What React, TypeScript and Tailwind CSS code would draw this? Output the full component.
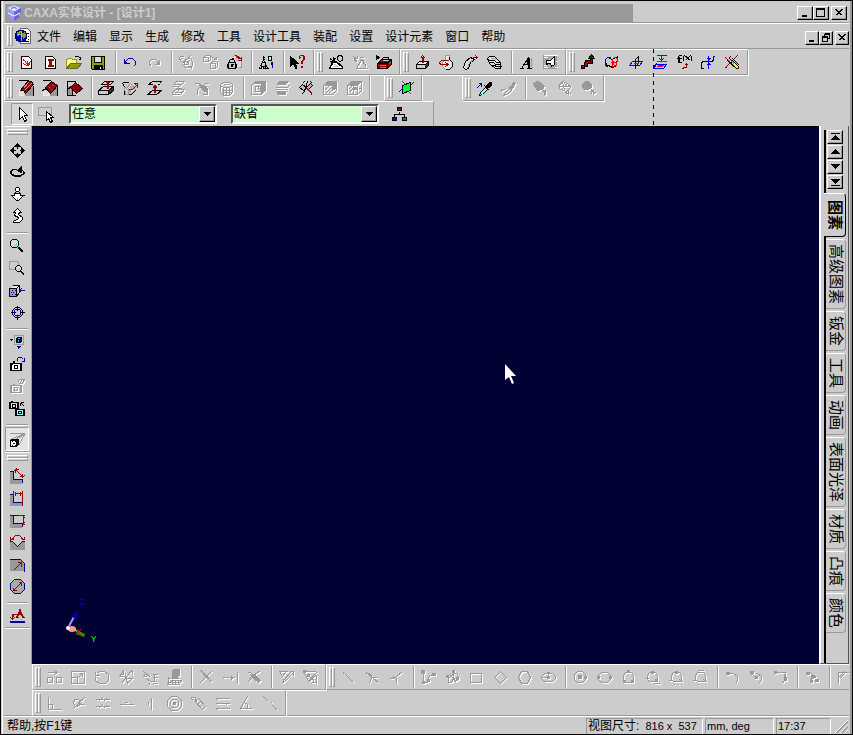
import { useState } from "react";
import clsx from "clsx";

// [path, stroke, fill]
type Part = [string, string, string?];

const K = "#000";
const W = "#fff";
const R = "#990000";
const B = "#000099";
const G = "#999";
const BLUE = "#0000ff";
const RED = "#ff0000";

const PAGE: Part = ["M3 2H10L13 5V14H3Z", K, W];
const CORNER: Part = ["M1 4H3V12H12V15H1Z", G, G];

const ICONS: Record<string, Part[]> = {
  "New design": [PAGE, ["M5 5L6 7M6 6L8 9M7 8L9 10L12 7M11 7V10L9 11M5 9L8 11H10M9 6V9", RED]],
  "New drawing": [PAGE, ["M5 5H11M5 6H11M8 6V11M7 6V11M9 6V11M5 11H11M5 12H11", R]],
  Open: [
    ["M0 14V5H1L2 4H5L6 5H10V8", "#990", "#ffff99"],
    ["M0 14L4 9H15L11 14Z", "#663", "#990"],
    ["M8 3L9 2H12L14 4M14 2V5H12", K],
  ],
  Save: [
    ["M1 2H14V15H2L1 14Z", K, "#990"],
    ["M4 2H11V8H4Z", K, "#ddd"],
    ["M4 11H12V15H4Z", K, K],
    ["M10 12V14", W],
  ],
  Undo: [["M2 4V9H7M2 8L6 4H10L13 7V10L11 12M3 7V8H4", B]],
  "Lock update": [
    ["M6 3L8 1H10V4M11 6H15V13H12", G, "#ddd"],
    ["M9 1L14 5M15 2V6H11M10 1L15 5", R],
    ["M3 8V6L4 5H7L8 6V8M2 8H9V14H2Z", K, "#ccc"],
    ["M1 9V13M10 9V13M5 10V12M6 10V12M4 10H7M4 5L3 6M7 4H5", K],
  ],
  "Browse tree": [
    ["M5 1V4M4 3H6M5 5L2 12M5 5L8 12M3 8H7M4 5H6M3 9V11M7 9V11M1 12V14M3 12V14M5 11V14M7 12V14M9 12V14M0 14H3M5 14H10M2 12H8", K],
    ["M10 2H13V6H10Z", K, "#9ff"],
    ["M14 7V13M13 7V10", B],
  ],
  "Context help": [
    ["M0 2V12L3 9L5 14H6V12L5 9H8Z", K, K],
    ["M9 4V2L10 1H13L14 3V5L12 7V9M10 3V2M13 2V5L11 7V9M11 12H12V13H11Z", R],
  ],
  "Smart render": [
    ["M1 14L4 8H9L14 12V14H1Z", K, W],
    ["M2 4L5 7M5 2V7M1 7H7M2 9L4 7M7 4L5 6M1 5H3M6 3V6M2 10H4", K],
    ["M9 3L10 1H13L14 3V6L11 7L9 5Z", K, "#ccc"],
    ["M9 7V9L13 12M8 7L14 13", K],
    ["M6 10L10 12M4 12H10", "#ccc"],
  ],
  "Tool box": [
    ["M1 9L5 5H15V10L11 14H1Z", K, R],
    ["M5 5L7 3H12V5M1 9H11V14M11 9L15 5M2 8H11L14 5", K],
    ["M0 1V5L3 3ZM1 2V4", K, K],
    ["M3 11H9M3 13H9M12 10L14 8", "#cc6666"],
    ["M6 6H12", "#ccc"],
  ],
  Extrude: [
    ["M2 10L5 7H14V11L11 14H2Z", K, "#333"],
    ["M2 10L5 7H14L11 10Z", K, "#eee"],
    ["M3 11H10V13H3Z", "#ccc", "#ccc"],
    ["M8 8V2M9 8V2M6 4L8 1L11 4M7 3H10", R],
  ],
  Spin: [
    ["M6 1H11M7 1V5L4 8V12L7 15H11L14 12V8L11 5V1", G, "#e8e8e8"],
    ["M11 2V5L14 8V12L11 15H7", K],
    ["M10 6H3L1 8V9L3 10H10M7 8L10 10L7 12M8 9V11", R],
  ],
  Sweep: [
    ["M1 13L3 7L8 3L12 5L8 8L6 14L3 15Z", K, "#ddd"],
    ["M5 14L7 8L11 5", G],
    ["M10 3H15M13 1L15 3L13 5M14 2V4", R],
  ],
  Loft: [
    ["M1 4L3 2H8L14 8V14H9L3 9Z", K, "#ddd"],
    ["M1 5L4 6H8L10 8H14M3 8H7L9 10H14M5 11H8L10 12H15M2 2H7", K],
    ["M4 4H8L10 6", G],
  ],
  Text: [
    ["M1 14H5M8 14H13M3 14L10 3L11 14M10 3V14M9 5V9M6 10H11M11 3V14", K],
    ["M13 3V11L14 14", G],
  ],
  "2D shape": [
    ["M1 1H14V14H1Z", G, "#aaa"],
    ["M1 1H15M1 3H5M1 13H5M1 11H4M12 13H15M13 7H15", W],
    ["M4 10V6H8L12 2V10L9 12L8 9H6Z", K, W],
  ],
  "3D curve": [
    ["M1 14V11H4V8H5V6H10V3H12V9H7V12H4V14Z", K, R],
    ["M8 4L11 0L14 4Z", K, R],
  ],
  Surface: [
    ["M1 5L3 3L8 5L13 2L12 11L8 13L4 11L2 12Z", K, "#ccc"],
    ["M8 4V12L12 11L13 4L10 3M6 8H11M9 6V10", RED],
    ["M1 5V11M1 5L3 3M2 3H6", BLUE],
  ],
  "Reference plane": [
    ["M1 11L4 7H14L11 11Z", BLUE],
    ["M7 14V5L10 2V9L7 12", K],
    ["M5 9H10", RED],
  ],
  "Offset plane": [
    ["M1 14L4 10H14L11 14ZM1 13L4 9", BLUE],
    ["M4 7H14M5 11H11M4 12H10", RED],
    ["M4 1H14M9 1V6M7 4L9 6L11 4M8 5H10", R],
  ],
  "Function curve": [
    ["M5 1H3L2 2V8M3 2V8M0 4H5M1 8H5M8 1L7 2V6L8 7M9 2L13 6M13 2L9 6M10 2L14 6M14 1L15 2V6L14 7", K],
    ["M6 15L7 13H10V10M8 11L10 9L12 11M9 10H11", R],
  ],
  "Insert curve": [
    ["M1 14V8L3 7H11L13 6V1M0 14H3", K],
    ["M8 1V14M6 4H10M7 5H9M6 10H10M7 9H9M12 2H14", BLUE],
  ],
  "Trim curve": [
    ["M1 13L6 8M9 5L13 1M1 3L6 8M0 13H2", R],
    ["M5 4L14 13M3 6L10 13M8 4L15 11M6 2L4 5", K],
    ["M8 6L14 12V14H12L7 9Z", K, "#ff0"],
    ["M7 7L10 10M8 7L10 9", "#0cc"],
    ["M12 14H14V12", R],
  ],
  "Blend edges": [
    ["M1 9H5L7 15H1Z", "#eee", "#ddd"],
    ["M6 14L14 5L15 6V15H7Z", G, G],
    ["M0 0H10M15 5V15", K],
    ["M2 10L9 1H13L15 4L7 13L5 10Z", K, R],
    ["M5 8L10 2M6 10L13 3", "#dd8888"],
  ],
  Chamfer: [
    ["M1 9H5L7 15H1Z", "#eee", "#ddd"],
    ["M8 14L14 5L15 6V15H8Z", G, G],
    ["M0 0H8M15 5V15M0 10L4 8", K],
    ["M3 7L9 1L15 5L8 13Z", K, R],
    ["M6 7H8M9 5H11M8 9H10", "#cc3333"],
  ],
  "Draft faces": [
    ["M1 5V15H6V9", K, G],
    ["M0 1H9M1 1V15H9M6 5L1 9", K],
    ["M4 7L9 2L16 8L10 13Z", K, R],
    ["M7 7H9M10 6H12M9 9H11", "#660000"],
  ],
  Shell: [
    ["M0 10L5 6H15L10 10Z", K, "#ccc"],
    ["M0 10V14H10L15 10V6L10 10V14", K, "#333"],
    ["M1 11H9V13H1Z", "#ccc", "#ccc"],
    ["M3 4L6 1H15L12 4Z", K],
    ["M9 8V1M10 8V1M7 3L9 1L12 3", R],
  ],
  "Move face": [
    ["M0 2H6M0 3L2 6V14H9L13 10", K],
    ["M2 7H6V14H3Z", G, "#ccc"],
    ["M4 8L8 3L13 9L9 13Z", G, "#ddd"],
    ["M5 7L9 12M7 5L11 10", G],
    ["M6 9H10L15 4M11 3H15V7M12 3L15 6", R],
  ],
  "Offset face": [
    ["M2 4L6 1H15L13 3M2 4H6M11 4H13", K],
    ["M1 14L6 10H15L10 14Z", K],
    ["M8 12V5M9 12V5M6 8L8 5H9L11 8M7 7H10", R],
  ],
  "Split part": [
    ["M1 7L4 4L8 7L5 10ZM8 7L12 3L14 5L10 9Z", K, "#bbb"],
    ["M3 14L6 11L9 1M4 3L6 1M12 1L14 3", K],
    ["M8 8L13 13M9 8L14 13M13 12V14", R],
  ],
  "Cutting plane": [
    ["M4 5L12 2V10L4 13Z", K, "#00ff33"],
    ["M4 1L7 4M11 12L13 14", RED],
    ["M0 12L4 8M12 5L15 2", B],
  ],
  Eyedropper: [
    ["M3 15L4 12L9 7L11 9L6 14Z", K, "#99ffff"],
    ["M8 5L13 10M10 6L13 2H15V5L11 8ZM9 5H12", K, K],
    ["M0 8L5 3M2 3H5V6", B],
  ],
  Select: [["M5 1V13L8 10L10 15L12 14L10 9H13Z", K, W]],
  "Box select": [
    ["M0 1H13V9H0Z", G],
    ["M8 5V14L10 12L12 16L14 15L12 11H15Z", K, W],
  ],
  "Assembly tree": [
    ["M8 5V8M3 11V8H13V11", K],
    ["M6 1H10V4H6Z", K, R],
    ["M1 11H5V14H1Z", K, BLUE],
    ["M11 11H15V14H11Z", K, "#009900"],
  ],
  Pan: [
    ["M5 4L8 1L11 4ZM5 12L8 15L11 12ZM4 5L1 8L4 11ZM12 5L15 8L12 11Z", K, K],
    ["M8 4V6M8 10V12M4 8H6M10 8H12", K],
  ],
  Orbit: [
    ["M7 5H4L2 6L1 8V9L3 11L6 12H10L13 11L15 9V8L13 6M2 7V9L5 11H11L14 9V7", K],
    ["M8 6L12 2V8ZM9 6H12", K, K],
  ],
  Zoom: [
    ["M6 4V2L7 1H9L10 2V4L9 5H7ZM5 7H11V9H14L9 14H7L2 9H5Z", K, W],
    ["M1 9H4M12 9H15M6 5V7M10 5V7", K],
    ["M8 11V13", G],
  ],
  Walk: [["M8 0L4 4H6L5 7L9 9V10L4 13V14H10L13 11V9L9 6L10 4H12Z", K, W]],
  "Zoom in": [
    ["M3 1H7L9 3V7L7 9H3L1 7V3Z", K, "#ddd"],
    ["M4 7H6L7 6V4", "#00ffff"],
    ["M9 9L14 14M10 9L14 13M9 10L13 14", K],
  ],
  "Zoom window": [
    ["M0 1H9V9H0Z", G],
    ["M8 5H10L12 7V9L10 11H8L6 9V7Z", K, "#ddd"],
    ["M8 9H9L10 8", "#00ffff"],
    ["M12 11L15 14M11 11L15 15", K],
  ],
  "Look at": [
    ["M0 6L3 3H10L7 6Z", "#66cccc", "#ccffff"],
    ["M0 6H7V14H0ZM7 6L10 3V10L7 14M3 3H10", K],
    ["M1 7H6V13H1Z", "#9999cc", "#9999cc"],
    ["M2 8H3M5 8H6M3 10H4M2 12H3M5 12H6M1 10H2M10 8H15M12 6L10 8L12 10M11 7V9", B],
  ],
  "Camera target": [
    ["M8 1V6M8 10V15M1 8H6M10 8H15M6 3H10L13 6V10L10 13H6L3 10V6Z", K],
    ["M6 5H10L11 6V10L10 11H6L5 10V6Z", B],
  ],
  "Fit scene": [
    ["M5 1H14V10H5Z", G],
    ["M7 4L8 3H12V7L11 8H7Z", K, K],
    ["M8 4H10M8 6H9V7", "#00ccff"],
    ["M0 5H3M2 4V6M9 11V14M8 13H10M7 12H11", B],
  ],
  "Save camera": [
    ["M1 7H12V14H1ZM3 6H5", K, W],
    ["M5 9H8V12H5ZM1 8H3M10 8H12M2 7V14M11 7V14M1 14H12M3 5H5", K],
    ["M8 4V2L9 1H12L14 3M15 1V5H12M14 4H15", B],
  ],
  "Next camera": [
    ["M0 2H9V8H0ZM3 4H6V7H3ZM1 1H3M1 2V8M8 2V8", K, "#ddd"],
    ["M6 9H15V15H6ZM7 8H9", K, "#99ffff"],
    ["M9 11H12V13H9ZM7 9V15M14 9V15", K, W],
    ["M11 2H14M11 2V5M12 3L15 6M12 2V3", K],
  ],
  Perspective: [
    ["M0 2H15M9 14L15 3M1 8L15 2M7 7L15 3", G],
    ["M1 9H7V15H1Z", K, W],
    ["M2 10H3M5 10H6M3 12H5M2 14H3M5 14H6", B],
    ["M1 9L3 8H9V13L7 15V9Z", K, K],
  ],
  "Smart dimension": [
    CORNER,
    ["M0 3H4V11H13V14", B],
    ["M6 1L13 8M6 1V4M6 1H9M13 8V5M13 8H10M4 3L7 0M12 10L15 7", R],
  ],
  "Horizontal dimension": [
    CORNER,
    ["M0 4H4V12H13", B],
    ["M4 0V5M13 0V15M5 3H12M6 1V5M11 1V5", R],
  ],
  "Vertical dimension": [
    CORNER,
    ["M0 3H4V11H13V14M4 3H13", B],
    ["M12 3H15M12 12H15M14 3V12M13 5H15M13 10H15M8 3H13", R],
  ],
  "Angle dimension": [
    ["M1 8H4L8 12L12 8H15V15H1Z", G, G],
    ["M0 7H3L8 12L13 7H15", B],
    ["M3 5L4 3L6 1H10L12 3L13 5M1 2V5H4M15 2V5H12M1 6L0 7", R],
  ],
  "Radius dimension": [
    ["M1 4H11L14 7V14H1Z", G, G],
    ["M0 3H11L15 7V15", B],
    ["M4 14L12 6M8 6H12V10", R],
  ],
  "Diameter dimension": [
    ["M5 1H11L15 5V11L11 15H5L1 11V5Z", B, "#aaa"],
    ["M4 12L12 4M4 9V12H7M9 4H12V7", R],
  ],
  Annotation: [
    ["M6 9H9M12 9H15M7 9L10 2L13 9M8 9L11 2L14 9M8 6H13M3 11V6H7M1 9L3 11L5 9M4 6V8", R],
    ["M0 13H15M0 14H15", B],
  ],
};

// greyed commands: [lines, solid areas]
const DISABLED: Record<string, [string, string?]> = {
  Redo: ["M13 5V10H8M13 9L9 5H5L3 7V10L5 11", "M11 8H13V10H11Z"],
  Relink: ["M1 2H5M1 2V5L4 8L9 4H12L14 7V11L11 13H7L4 10M6 7H10V10H6ZM12 1L4 9M10 12L14 14M2 5L5 3M11 6L8 9"],
  "Copy link": ["M1 3L3 1H8V5L6 7H1ZM1 3H6V7M8 9L10 7H15V12L13 14H8ZM8 9H13V14M9 2L14 5M14 2V5H11"],
  "Smart motion": ["M1 2L5 5M1 6H4M5 1V4M7 3L11 3M5 12L9 5L14 13M3 14H15M8 8L4 14M2 4L4 8M9 6L6 11M10 5L13 11"],
  Thicken: ["M2 5L6 1H14L9 6H2M1 14L5 9H14L10 14H1M8 5V10M5 8H11M4 4H11M4 12H11"],
  "Split face": ["M0 3H5L8 7M3 14V9L9 4M5 5L13 13M8 14H13V7M6 9L11 3H14M4 3L14 13", "M5 5L12 6V12L8 9Z"],
  Sphere: ["M2 4L5 2H11L14 4V12L11 15H5L2 12ZM2 5L5 7H11L14 5M5 7V14M8 7V15M11 7V14M3 10H13M3 12H13M5 4H11"],
  Union: ["M2 4L5 1H15V10L11 14H1V5ZM5 6H10V11H5ZM8 4V8H12", "M11 4H14V10L11 13ZM3 3L5 2H14V3Z"],
  Subtract: ["M3 3L5 1H14L11 4H3ZM1 7H13L15 5M1 9H13M3 12H11L14 10M3 14H11", "M4 3L6 1H13L11 3ZM3 11H11V13H3Z"],
  "Cut box": ["M1 5L5 1H14V10L10 14H1ZM3 13L10 6M2 10L7 5M6 13L10 9", "M5 2H13V8L10 10V5H3Z"],
  "Rib box": ["M1 5L5 1H15V10L11 14H1ZM1 5H11V14M7 5V13M3 12L7 7M2 9L5 6M11 5L15 1M12 8H15", "M8 7H10V9H8ZM5 2H13L11 4H4Z"],
  "Apply style": ["M3 15L5 12L9 8L11 10L6 14ZM8 6L12 10M1 11L3 9L6 8M1 11V8", "M10 7L13 2L15 3L12 8Z"],
  "Paint part": ["M10 10L14 14M10 10H13V14M12 9V15", "M1 3L4 1L8 2L12 6L10 9L5 10L3 7Z"],
  "Paint faces": ["M2 6L6 1L11 3L14 7L10 11L4 9ZM2 6H14M6 1L8 10M11 3L5 9M11 10L15 14M9 12L13 14M12 8V14"],
  "Paint body": ["M11 9L15 14M11 9V13M12 12H15M13 9V14", "M2 4L5 1H8L11 4V7L8 9H4L2 7Z"],
  "Restore camera": ["M1 7H12V14H1ZM5 9H8V12H5ZM2 7V14M8 4L10 1H15L13 5H10L12 2M3 6H5M11 7V14"],
  "Move sketch": ["M1 3H10M8 1L11 3L8 5M9 2V4M1 8H6V13H1ZM10 8H15V13H10Z"],
  "Scale sketch": ["M1 2H14V14H1ZM1 8H7V14M8 8L12 4M9 4H12V7"],
  "Rotate sketch": ["M3 4L5 2H10L14 5V11L11 14H5L1 11V7M1 2V6H5M3 4V6"],
  "Mirror sketch": ["M1 5H5V1M5 1L1 7H7V3M13 1L3 14M8 9H14L9 14ZM11 2H14V5"],
  "Offset sketch": ["M1 2L8 8M3 4L1 7H4M4 9L8 12H14M7 13V15M10 5H15M12 5V11M10 8H15M10 14H15"],
  "Project edges": ["M1 9H4M2 7V13M1 13H14L15 11H5L2 14ZM5 9H13M6 14V11M9 14V11M12 14V11M0 15H13", "M6 1L8 0H13V6L11 8H6Z"],
  "Delete curve": ["M2 1L13 13M2 13L13 2M3 1L14 12M1 14L3 12"],
  Extend: ["M0 8H3M4 8H6M7 8H12M9 6V10M10 7V9M15 2V14"],
  Break: ["M1 3H4L13 13M1 13L12 2M4 5L13 14M9 4L14 2M2 10L6 6", "M6 5L8 5L14 11L12 13L6 8Z"],
  "Show constraints": ["M1 2H9M1 2L4 7L7 3M5 11L12 3M3 13H5L14 4M11 2H15V6M5 9V13M6 12L13 5"],
  "Hide constraints": ["M2 2L13 2M2 3L6 12M5 5L12 12M6 12L14 3M14 5V14M8 13H14M11 9V13M6 13L13 6", "M1 1H3V3H1ZM5 5H7V7H5Z"],
  Line: ["M3 3L13 13M3 2V4"],
  Tangent: ["M2 3L15 14M1 4H5L8 8M7 8L5 14M8 8H12"],
  Perpendicular: ["M1 9H5L8 7M8 14V8M8 7L14 2M4 7L8 11"],
  Polyline: ["M3 3V13H7L9 6H14", "M1 1H4V4H1ZM2 12H4V14H2ZM7 10H9V12H7ZM12 4H15V6H12Z"],
  Spline: ["M2 7L5 5L9 9L7 13H4V9L9 4H12L14 7V10L11 12L9 8V3", "M8 1H10V3H8ZM2 6H4V8H2ZM12 8H14V10H12Z"],
  Rectangle: ["M2 4H13V13H2Z"],
  "Rotated rectangle": ["M2 8L8 2L14 8L8 14Z"],
  Polygon: ["M5 2H11L14 8L11 14H5L2 8Z"],
  Ellipse: ["M4 4H12L15 7V9L12 12H4L1 9V7ZM8 4V9M1 8H8", "M7 3H9V4H7ZM7 7H9V9H7Z"],
  "Circle centre": ["M5 2H10L13 5V10L10 13H5L2 10V5Z", "M6 6H9V9H6ZM12 7H14V9H12Z"],
  "Circle two points": ["M5 3H11L14 6V10L11 13H5L2 10V6Z", "M1 7H3V9H1ZM13 7H15V9H13Z"],
  "Circle three points": ["M5 3H11L13 6V12L11 13H5L3 12V6Z", "M7 1H9V3H7ZM3 11H5V13H3ZM11 11H13V13H11Z"],
  "Circle one tangent": ["M5 3H11L13 6V10L11 12H5L3 10V6ZM0 9H4M9 14H15", "M7 2H9V4H7ZM11 10H13V12H11Z"],
  "Circle two tangents": ["M5 3H11L13 6V10L11 12H5L3 10V6ZM0 11H4M11 10L15 13M6 14V15M10 14V15", "M7 2H9V4H7Z"],
  "Circle three tangents": ["M5 3H11L13 6V10L11 12H5L3 10V6ZM0 11H4M5 1H11M11 10L15 13M6 14V15"],
  "Arc two points": ["M3 4H9L13 7V11L11 14", "M2 3H5V5H2Z"],
  "Arc centre": ["M2 3L9 10M9 4L13 7V11L10 14M4 3L3 6M7 8L5 10", "M2 2H5V4H2ZM7 7H9V9H7Z"],
  "Arc three points": ["M3 3H13V9L10 14M12 4V9", "M2 2H4V4H2ZM12 8H14V11H12Z"],
  "Project curve": ["M3 5L6 3L9 6L6 10L12 7M6 10L8 13", "M2 3H5V5H2ZM7 6H10V8H7ZM11 10H14V12H11ZM6 11H8V13H6Z"],
  Fillet: ["M2 14V3H15M3 9L9 3M2 8L8 2"],
  "Constrain perpendicular": ["M2 1V14H15M2 9H6V14"],
  "Constrain tangent": ["M4 4H8L11 7L9 10L5 11L3 8ZM2 14L14 2M12 5H9V9H14"],
  "Constrain parallel": ["M1 4H15M1 11H15M4 6L8 2M9 6L12 3M4 13L8 9M9 13L12 10"],
  "Constrain horizontal": ["M1 9H15M6 7H9"],
  "Constrain vertical": ["M9 2V14M6 6V9"],
  "Constrain concentric": ["M5 1H11L15 5V11L11 15H5L1 11V5ZM6 4H10L12 6V10L10 12H6L4 10V6Z", "M7 7H9V9H7Z"],
  "Constrain coincident": ["M1 2H5L6 6L1 3ZM5 6L8 3L15 11L12 14ZM7 9L10 6"],
  "Constrain equal": ["M1 3H15M1 8H15M1 13H15M3 2V4M12 7V9M3 12V14"],
  "Constrain angle": ["M9 1L2 13H14M6 7L9 9V13"],
  "Constrain collinear": ["M1 1L6 6M8 7H9M10 10L15 15"],
};

const SEP = "|";

const STANDARD = ["New design", "New drawing", "Open", "Save", SEP, "Undo", "Redo", SEP, "Relink", "Copy link", "Lock update", SEP, "Browse tree", SEP, "Context help"];
const SMART = ["Smart render", "Smart motion", "Tool box"];
const FEATURE = ["Extrude", "Spin", "Sweep", "Loft", SEP, "Text", "2D shape"];
const CURVES = ["3D curve", "Surface", "Reference plane", "Offset plane", "Function curve", "Insert curve", "Trim curve"];
const FACES = ["Blend edges", "Chamfer", "Draft faces", SEP, "Shell", "Move face", "Offset face", "Thicken", "Split face", "Sphere", SEP, "Union", "Subtract", "Split part", "Cut box", "Rib box"];
const SECTION = ["Cutting plane"];
const STYLE = ["Eyedropper", "Apply style", SEP, "Paint part", "Paint faces", "Paint body"];
const CAMERA = ["Pan", "Orbit", "Zoom", "Walk", SEP, "Zoom in", "Zoom window", "Look at", "Camera target", SEP, "Fit scene", "Save camera", "Restore camera", "Next camera", SEP, "Perspective"];
const DIMENSION = ["Smart dimension", "Horizontal dimension", "Vertical dimension", "Angle dimension", "Radius dimension", "Diameter dimension", SEP, "Annotation"];
const SKETCH_EDIT = ["Move sketch", "Scale sketch", "Rotate sketch", "Mirror sketch", "Offset sketch", "Project edges", SEP, "Delete curve", "Extend", "Break", SEP, "Show constraints", "Hide constraints"];
const SKETCH_DRAW = [
  "Line", "Tangent", "Perpendicular", SEP,
  "Polyline", "Spline", "Rectangle", "Rotated rectangle", "Polygon", "Ellipse", SEP,
  "Circle centre", "Circle two points", "Circle three points", "Circle one tangent", "Circle two tangents", "Circle three tangents", SEP,
  "Arc two points", "Arc centre", "Arc three points", SEP, "Project curve", SEP, "Fillet",
];
const CONSTRAINTS = [
  "Constrain perpendicular", "Constrain tangent", "Constrain parallel", "Constrain horizontal", "Constrain vertical",
  "Constrain concentric", "Constrain coincident", "Constrain equal", "Constrain angle", "Constrain collinear",
];

const MENUS = ["文件", "编辑", "显示", "生成", "修改", "工具", "设计工具", "装配", "设置", "设计元素", "窗口", "帮助"];
const CATALOGS = ["图素", "高级图素", "钣金", "工具", "动画", "表面光泽", "材质", "凸痕", "颜色"];

function Icon({ name }: { name: string }) {
  const off = DISABLED[name];
  return (
    <svg width="16" height="16" viewBox="-0.5 -0.5 16 16" className="overflow-visible" shapeRendering="crispEdges" fill="none" aria-hidden="true">
      {off
        ? [W, G].map((c) => (
            <g key={c} transform={c === W ? "translate(1 1)" : undefined} stroke={c}>
              <path d={off[0]} />
              {off[1] && <path d={off[1]} fill={c} />}
            </g>
          ))
        : ICONS[name].map(([d, stroke, fill], i) => <path key={i} d={d} stroke={stroke} fill={fill ?? "none"} />)}
    </svg>
  );
}

function ToolButton({ name, vertical, pressed }: { name: string; vertical?: boolean; pressed?: boolean }) {
  return (
    <button
      type="button"
      aria-label={name}
      disabled={name in DISABLED}
      className={clsx(
        "flex w-6 shrink-0 items-center justify-center",
        !vertical && "h-full",
        vertical && (pressed ? "h-6" : "h-[22px]"),
        pressed && "bg-[#e4e4e4] border border-t-[#999] border-l-[#999] border-r-white border-b-white"
      )}
    >
      <Icon name={name} />
    </button>
  );
}

function Grip({ vertical }: { vertical?: boolean }) {
  const bar = "border border-t-white border-l-white border-r-[#999] border-b-[#999]";
  return vertical ? (
    <div className="h-1.5 mt-0.5 mb-1 ml-0.5 mr-0.5 shrink-0">
      <div className={clsx(bar, "h-[3px]")} />
      <div className={clsx(bar, "h-[3px]")} />
    </div>
  ) : (
    <div className="flex w-1.5 h-5 ml-0.5 mr-px shrink-0">
      <div className={clsx(bar, "w-[3px]")} />
      <div className={clsx(bar, "w-[3px]")} />
    </div>
  );
}

function Toolbar({ items, open }: { items: string[]; open?: boolean }) {
  return (
    <div
      role="toolbar"
      className={clsx(
        "flex h-[26px] items-center border-t border-l border-white border-b border-b-[#999]",
        open ? "flex-1 min-w-0 overflow-hidden" : "shrink-0 border-r border-r-[#999] pr-[3px] shadow-[1px_1px_0_#fff]"
      )}
    >
      <Grip />
      {items.map((item, i) =>
        item === SEP ? (
          <div key={i} className="w-2 h-[22px] pl-[5px] shrink-0">
            <div className="w-0.5 h-full border-l border-l-[#999] border-r border-r-white" />
          </div>
        ) : (
          <ToolButton key={item} name={item} />
        )
      )}
    </div>
  );
}

function SideToolbar({ items }: { items: string[] }) {
  return (
    <div role="toolbar" aria-orientation="vertical" className="flex flex-col border-t border-white border-b border-b-[#999] shadow-[0_1px_0_#fff]">
      <Grip vertical />
      {items.map((item, i) =>
        item === SEP ? (
          <div key={i} className="h-2 pt-[5px] mx-0.5">
            <div className="h-0.5 border-t border-t-[#999] border-b border-b-white" />
          </div>
        ) : (
          <ToolButton key={item} name={item} vertical pressed={item === "Perspective"} />
        )
      )}
    </div>
  );
}

const RAISED = "flex items-center justify-center bg-[#ccc] border border-t-white border-l-white border-r-black border-b-black shadow-[inset_-1px_-1px_0_#999]";

function WindowButton({ label, d, className }: { label: string; d: string; className: string }) {
  return (
    <button type="button" aria-label={label} className={clsx(RAISED, className)}>
      <svg width="10" height="10" viewBox="-0.5 -0.5 10 10" fill="none" stroke="#000" shapeRendering="crispEdges">
        <path d={d} />
      </svg>
    </button>
  );
}

const CLOSE = "M1 1L7 7M2 1L8 7M7 1L1 7M8 1L2 7";
const MINIMIZE = "M1 7H6M1 8H6";
const MAXIMIZE = "M0 0H8V8H0ZM0 1H8";
const RESTORE = "M3 0H8V5H6M3 1H8M3 0V3M1 3H6V8H1ZM1 4H6";

function Combo({ label, value }: { label: string; value: string }) {
  return (
    <div className="relative w-[148px] h-5 border-2 border-t-[#555] border-l-[#555] border-r-white border-b-white bg-[#ccffcc]">
      <select aria-label={label} className="block w-full h-full appearance-none bg-[#ccffcc] pl-px text-xs leading-4 outline-none">
        <option>{value}</option>
      </select>
      <span className={clsx(RAISED, "absolute right-0 top-0 w-4 h-4 pointer-events-none")}>
        <svg width="7" height="4" viewBox="0 0 7 4" shapeRendering="crispEdges">
          <path d="M0 0H7L3.5 4Z" />
        </svg>
      </span>
    </div>
  );
}

function TitleBar() {
  return (
    <header className="flex items-center justify-between pt-0.5 pl-px h-[23px] border-b border-b-white shadow-[inset_0_-1px_0_#999]">
      <div className="flex items-center w-[628px] h-[18px] bg-[#999] text-[#ccc]">
        <svg width="18" height="18" viewBox="0 0 18 18" className="mr-px shrink-0" aria-hidden="true">
          <path d="M2 4L9 1L16 4L9 8Z" fill="#ccccff" />
          <path d="M2 4L9 8V17L3 13L5 12L2 9Z" fill="#9999ff" />
          <path d="M16 4L9 8V17L15 13L13 11L16 9Z" fill="#6666cc" />
          <path d="M5 4L9 6L13 4M3 9L9 12L15 9" stroke="#fff" fill="none" />
          <path d="M6 5L9 3L12 5" stroke="#6666cc" fill="none" />
        </svg>
        <h1 className="text-xs leading-4 font-bold whitespace-nowrap">CAXA实体设计 - [设计1]</h1>
      </div>
      <div className="flex mr-0.5">
        <WindowButton label="Minimize" d={MINIMIZE} className="w-4 h-[14px]" />
        <WindowButton label="Maximize" d={MAXIMIZE} className="w-4 h-[14px]" />
        <WindowButton label="Close" d={CLOSE} className="w-4 h-[14px] ml-0.5" />
      </div>
    </header>
  );
}

function MenuBar() {
  return (
    <nav className="flex items-center h-[25px] border-b border-b-[#999]">
      <div className="pl-px flex">
        <Grip />
      </div>
      <svg width="17" height="18" viewBox="0 0 17 18" className="shrink-0" shapeRendering="crispEdges" aria-hidden="true">
        <path d="M6 1H13L16 4V16H6Z" fill="#fff" stroke="#666" />
        <path d="M13 6H15M14 9H15M14 12H15M10 14H15" stroke="#000" />
        <circle cx="7" cy="9" r="6" fill="#000099" stroke="#000066" />
        <path d="M3 5L7 4L6 8L3 9Z" fill="#999900" />
        <path d="M7 4V14M4 7H12" stroke="#66ccff" />
        <path d="M8 6L11 5L12 9L9 13Z" fill="#999933" />
      </svg>
      <ul className="flex flex-1">
        {MENUS.map((menu) => (
          <li key={menu}>
            <button type="button" className="px-1.5 text-xs leading-5 whitespace-nowrap">
              {menu}
            </button>
          </li>
        ))}
      </ul>
      <div className="flex pt-1">
        <WindowButton label="Minimize document" d={MINIMIZE} className="w-[14px] h-[14px]" />
        <WindowButton label="Restore document" d={RESTORE} className="w-[14px] h-[14px]" />
        <WindowButton label="Close document" d={CLOSE} className="w-[14px] h-[14px] ml-0.5" />
      </div>
    </nav>
  );
}

function Viewport() {
  return (
    <main className="relative flex-1 min-w-0 bg-[#000033] border-t border-black">
      {/* mouse pointer */}
      <svg width="12" height="20" viewBox="0 0 12 20" className="absolute left-[473px] top-[237px]" aria-hidden="true">
        <path d="M0 0V16L4 13L7 20L9 19L6 12H11Z" fill="#fff" />
      </svg>
      {/* axis triad */}
      <svg width="40" height="50" viewBox="0 0 40 50" className="absolute left-7 bottom-[18px] font-mono text-[9px]" aria-label="XYZ">
        <path d="M9 30L15 19" stroke="#9999ff" strokeWidth="2" />
        <path d="M18 14L17 24L11 20Z" fill="#000099" />
        <path d="M15 34L24 40" stroke="#00ff00" strokeWidth="2" />
        <path d="M17 34L25 38L24 41L16 38Z" fill="#009900" />
        <ellipse cx="12" cy="33" rx="4" ry="3" fill="#ff9999" />
        <circle cx="8" cy="32" r="2" fill="#fff" />
        <text x="20" y="9" fill="#0000cc">Z</text>
        <text x="16" y="39" fill="#ff0000">X</text>
        <text x="31" y="46" fill="#00ff00">Y</text>
      </svg>
    </main>
  );
}

const SCROLLERS = [
  { label: "First catalog", d: "M1 0H10V1H1ZM1 7L5.5 2L10 7Z" },
  { label: "Previous catalog", d: "M1 6L5.5 1L10 6Z" },
  { label: "Next catalog", d: "M1 1L5.5 6L10 1Z" },
  { label: "Last catalog", d: "M1 7H10V8H1ZM1 1L5.5 6L10 1Z" },
];

function CatalogDock() {
  const [active, setActive] = useState(CATALOGS[0]);
  return (
    <aside className="w-[30px] shrink-0 flex border-l-2 border-l-white border-r border-r-[#555] border-b border-b-[#555] pl-[3px] pt-1">
      <div className="flex-1 border-l-2 border-l-black">
        <div className="flex flex-col gap-px pl-px">
          {SCROLLERS.map(({ label, d }) => (
            <button key={label} type="button" aria-label={label} className={clsx(RAISED, "w-4 h-[14px]")}>
              <svg width="11" height="8" viewBox="0 0 11 8" shapeRendering="crispEdges">
                <path d={d} />
              </svg>
            </button>
          ))}
        </div>
        <div role="tablist" aria-orientation="vertical" className="flex flex-col gap-0.5 mt-1">
          {CATALOGS.map((name) => (
            <button
              key={name}
              type="button"
              role="tab"
              aria-selected={name === active}
              onClick={() => setActive(name)}
              className={clsx(
                "flex items-center justify-center rounded-r-sm border-t border-t-white border-r border-b text-[15px] leading-[18px] [writing-mode:vertical-rl] [text-orientation:sideways]",
                name === active
                  ? "-ml-0.5 w-[22px] pt-1.5 pb-1.5 bg-[#ccc] border-r-black border-b-black font-bold"
                  : "w-5 pt-1 pb-1 border-r-[#999] border-b-[#999]"
              )}
            >
              {name}
            </button>
          ))}
        </div>
      </div>
    </aside>
  );
}

function StatusBar() {
  const cell = "flex items-center h-4 border-t border-l border-[#999] border-r border-r-white pl-px";
  return (
    <footer className="flex items-center h-[18px] pt-px gap-0.5 text-xs leading-4 shadow-[inset_0_1px_0_#fff]">
      <p className="flex-1 pl-[3px]">帮助,按F1键</p>
      <p className={clsx(cell, "w-[117px] whitespace-pre")}>
        视图尺寸:<span className="text-[11px]">{"  816 x  537"}</span>
      </p>
      <p className={clsx(cell, "w-[69px] text-[11px]")}>mm, deg</p>
      <p className={clsx(cell, "w-[55px] text-[11px]")}>17:37</p>
      <svg width="16" height="14" viewBox="0 0 16 14" aria-hidden="true">
        <path d="M2 14L15 1M7 14L15 6M12 14L15 11" stroke="#fff" />
        <path d="M3 14L15 2M4 14L15 3M8 14L15 7M9 14L15 8M13 14L15 12" stroke="#999" />
      </svg>
    </footer>
  );
}

export default function App() {
  return (
    <div className="h-screen bg-[#ccc] border border-black pl-px text-black font-['Liberation_Sans','Noto_Sans_CJK_SC',sans-serif]">
      <div className="flex flex-col h-full border-l border-l-white border-r-2 border-r-[#999] pl-px pr-px">
        <TitleBar />
        <MenuBar />

        {/* TOOLBARS */}
        <section className="relative shrink-0">
          <div className="flex">
            <Toolbar items={STANDARD} />
            <Toolbar items={SMART} />
            <Toolbar items={FEATURE} />
            <Toolbar items={CURVES} />
          </div>
          <div className="flex">
            <Toolbar items={FACES} />
            <div className="w-[14px]" />
            <Toolbar items={SECTION} />
            <div className="w-10" />
            <Toolbar items={STYLE} />
          </div>
          <div className="flex items-center w-[430px] h-[25px] border-t border-t-white border-r border-r-[#999]">
            <button type="button" aria-label="Select" aria-pressed="true" className="ml-[7px] flex w-[22px] h-[22px] items-center justify-center border border-t-[#999] border-l-[#999] border-r-white border-b-white bg-[#d4d4d4]">
              <Icon name="Select" />
            </button>
            <button type="button" aria-label="Box select" className="ml-px flex w-6 h-[22px] items-center justify-center">
              <Icon name="Box select" />
            </button>
            <div className="flex gap-[14px] ml-[11px]">
              <Combo label="Selection filter" value="任意" />
              <Combo label="Configuration" value="缺省" />
            </div>
            <button type="button" aria-label="Assembly tree" className="ml-2 flex w-6 h-[22px] items-center justify-center">
              <Icon name="Assembly tree" />
            </button>
          </div>
          <div className="absolute left-[649px] top-0 w-px h-full bg-[repeating-linear-gradient(#000_0_4px,transparent_4px_8px)] pointer-events-none" />
        </section>

        {/* WORK AREA */}
        <div className="flex flex-1 min-h-0">
          <div className="w-7 shrink-0 pl-px pr-px border-r border-r-[#999]">
            <SideToolbar items={CAMERA} />
            <SideToolbar items={DIMENSION} />
          </div>
          <Viewport />
          <CatalogDock />
        </div>

        {/* SKETCH TOOLBARS */}
        <section className="shrink-0 shadow-[inset_0_-1px_0_#999]">
          <div className="flex pl-7">
            <Toolbar items={SKETCH_EDIT} />
            <Toolbar items={SKETCH_DRAW} open />
          </div>
          <div className="flex pl-7">
            <Toolbar items={CONSTRAINTS} />
          </div>
        </section>
        <StatusBar />
      </div>
    </div>
  );
}
